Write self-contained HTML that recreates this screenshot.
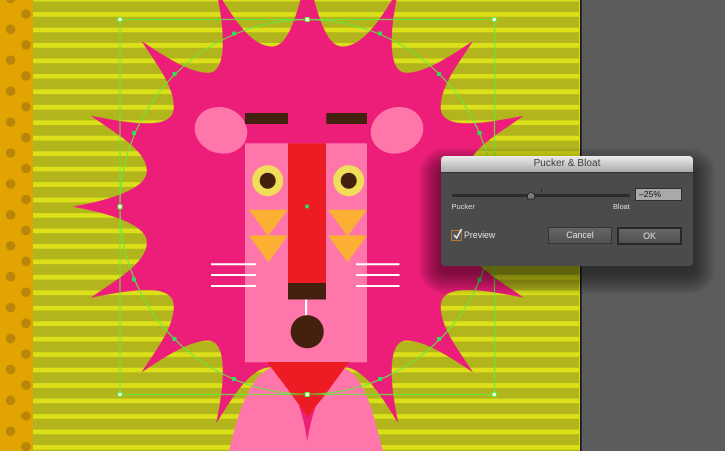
<!DOCTYPE html>
<html>
<head>
<meta charset="utf-8">
<style>
html,body{margin:0;padding:0;background:#5c5c5c}
#wrap{position:relative;width:725px;height:451px;overflow:hidden;font-family:"Liberation Sans",sans-serif}
svg.art{position:absolute;left:0;top:0}
#dlg{position:absolute;left:441px;top:156px;width:252px;height:110px;background:#4b4b4b;border-radius:4px}
#bar{position:absolute;left:0;top:0;width:252px;height:16px;border-radius:4px 4px 0 0;background:linear-gradient(#ececec,#ababab);border-bottom:1px solid #333;text-align:center;font-size:10px;line-height:16px;color:#3a3a3a;letter-spacing:.05px}
.t{position:absolute;color:#dedede;white-space:nowrap;line-height:10px}
#track{position:absolute;left:11px;top:38px;width:178px;height:3px;background:#2b2b2b;border-radius:1px}
#tick{position:absolute;left:100px;top:33px;width:1px;height:3px;background:#222}
#val{position:absolute;left:194px;top:32px;width:47px;height:13px;box-sizing:border-box;background:#a9a9a9;border:1px solid #2e2e2e;color:#111;font-size:8.6px;line-height:11px;padding-left:3px}
#chk{position:absolute;left:10px;top:74px;width:11px;height:11px;box-sizing:border-box;border:1px solid #b5763a;background:#555}
.btn{position:absolute;box-sizing:border-box;background:linear-gradient(#666,#515151);color:#e2e2e2;text-align:center;font-size:8.8px}
</style>
</head>
<body>
<div id="wrap">
<svg class="art" width="725" height="451" viewBox="0 0 725 451" xmlns="http://www.w3.org/2000/svg">
  <defs>
    <path id="q" d="M307.25 206.7 L73.5 206.7 C105 201 147 190 147 171 C147 150 115 133 91.5 116 C112 120 130 123.5 148 123.5 C165 123.5 174 118 174 107 C174 85 155 62 142 41.5 C165 57 190 73 208 73 C218 73 223 62 223 42 C223 25 220 8 216.5 -9 C228 8 248 46.7 272 46.7 C287 46.7 296 22 307.25 -27 Z" fill="#ed1e79" stroke="#ed1e79" stroke-width=".4"/>
  </defs>

  <rect x="0" y="0" width="725" height="451" fill="#5c5c5c"/>
  <rect x="33" y="0" width="547" height="451" fill="#b2b61c"/>
  <path fill="#dbe018" d="M33 -3.35h547v4.7h-547zM33 12.11h547v4.7h-547zM33 27.57h547v4.7h-547zM33 43.03h547v4.7h-547zM33 58.49h547v4.7h-547zM33 73.95h547v4.7h-547zM33 89.41h547v4.7h-547zM33 104.87h547v4.7h-547zM33 120.33h547v4.7h-547zM33 135.79h547v4.7h-547zM33 151.25h547v4.7h-547zM33 166.71h547v4.7h-547zM33 182.17h547v4.7h-547zM33 197.63h547v4.7h-547zM33 213.09h547v4.7h-547zM33 228.55h547v4.7h-547zM33 244.01h547v4.7h-547zM33 259.47h547v4.7h-547zM33 274.93h547v4.7h-547zM33 290.39h547v4.7h-547zM33 305.85h547v4.7h-547zM33 321.31h547v4.7h-547zM33 336.77h547v4.7h-547zM33 352.23h547v4.7h-547zM33 367.69h547v4.7h-547zM33 383.15h547v4.7h-547zM33 398.61h547v4.7h-547zM33 414.07h547v4.7h-547zM33 429.53h547v4.7h-547zM33 444.99h547v4.7h-547z"/>
  <rect x="0" y="0" width="33" height="451" fill="#e2a400"/>
  <g fill="#b98609">
    <circle cx="10.6" cy="-1.6" r="4.8"/><circle cx="10.6" cy="29.32" r="4.8"/><circle cx="10.6" cy="60.24" r="4.8"/><circle cx="10.6" cy="91.16" r="4.8"/><circle cx="10.6" cy="122.08" r="4.8"/><circle cx="10.6" cy="153" r="4.8"/><circle cx="10.6" cy="183.92" r="4.8"/><circle cx="10.6" cy="214.84" r="4.8"/><circle cx="10.6" cy="245.76" r="4.8"/><circle cx="10.6" cy="276.68" r="4.8"/><circle cx="10.6" cy="307.6" r="4.8"/><circle cx="10.6" cy="338.52" r="4.8"/><circle cx="10.6" cy="369.44" r="4.8"/><circle cx="10.6" cy="400.36" r="4.8"/><circle cx="10.6" cy="431.28" r="4.8"/>
    <circle cx="26" cy="14" r="4.8"/><circle cx="26" cy="44.92" r="4.8"/><circle cx="26" cy="75.84" r="4.8"/><circle cx="26" cy="106.76" r="4.8"/><circle cx="26" cy="137.68" r="4.8"/><circle cx="26" cy="168.6" r="4.8"/><circle cx="26" cy="199.52" r="4.8"/><circle cx="26" cy="230.44" r="4.8"/><circle cx="26" cy="261.36" r="4.8"/><circle cx="26" cy="292.28" r="4.8"/><circle cx="26" cy="323.2" r="4.8"/><circle cx="26" cy="354.12" r="4.8"/><circle cx="26" cy="385.04" r="4.8"/><circle cx="26" cy="415.96" r="4.8"/><circle cx="26" cy="446.88" r="4.8"/>
  </g>
  <rect x="579" y="0" width="1" height="451" fill="#dde319"/>
  <rect x="580" y="0" width="1.6" height="451" fill="#151515"/>

  <use href="#q"/>
  <use href="#q" transform="matrix(-1 0 0 1 614.5 0)"/>
  <use href="#q" transform="matrix(1 0 0 -1 0 413.4)"/>
  <use href="#q" transform="matrix(-1 0 0 -1 614.5 413.4)"/>

  <ellipse cx="221" cy="130.3" rx="26.6" ry="23" transform="rotate(18 221 130.3)" fill="#ff77aa"/>
  <ellipse cx="397" cy="130.3" rx="26.6" ry="23" transform="rotate(-18 397 130.3)" fill="#ff77aa"/>

  <path d="M229 451 C237 420 246 378 272 367 L342 367 C365 375 372 410 383 451 Z" fill="#ff77aa"/>
  <path d="M299 406 C303.5 418 305.5 430 307.3 441 C309 430 311.5 418 316 406 Z" fill="#ed1e79"/>

  <rect x="245" y="143.3" width="122" height="219" fill="#ff77aa"/>
  <path d="M267 362 L349 362 L325 395 C317 405 311 411 307.7 418 C304 411 298 404 292 395 Z" fill="#ed1c24"/>

  <rect x="245" y="113" width="43" height="11" fill="#44210e"/>
  <rect x="326.3" y="113" width="40.7" height="11" fill="#44210e"/>

  <rect x="288" y="143.3" width="38" height="139.7" fill="#ed1c24"/>
  <rect x="288" y="283" width="38" height="16.5" fill="#44210e"/>
  <rect x="305" y="299.5" width="2.2" height="16" fill="#fff"/>
  <circle cx="307.2" cy="331.7" r="16.6" fill="#44210e"/>

  <circle cx="267.7" cy="180.7" r="15.5" fill="#f0de5a"/>
  <circle cx="267.7" cy="180.7" r="8" fill="#44210e"/>
  <circle cx="348.7" cy="180.7" r="15.5" fill="#f0de5a"/>
  <circle cx="348.7" cy="180.7" r="8" fill="#44210e"/>

  <path d="M249 209.7 H287.7 L268.3 236 Z M249 235.5 H287.7 L268.3 262.3 Z M328 209.7 H367 L347.5 236 Z M328 235.5 H367 L347.5 262.3 Z" fill="#fbb034"/>

  <path d="M211 264.3 H256 M211 275 H256 M211 286 H256 M356 264.3 H399.5 M356 275 H399.5 M356 286 H399.5" stroke="#fff" stroke-width="2" fill="none"/>

  <!-- selection -->
  <g fill="none" stroke="#62ec3e" stroke-width="1.2" opacity=".85">
    <rect x="120" y="19.5" width="374.5" height="375"/>
    <circle cx="307.25" cy="206.9" r="187.3"/>
  </g>
  <path d="M291 394.5 H323" stroke="#8f8f1f" stroke-width="1.2"/>
  <g fill="#2ee05c">
    <rect x="132" y="131" width="4" height="4"/>
    <rect x="172.5" y="72" width="4" height="4"/>
    <rect x="232" y="31.5" width="4" height="4"/>
    <rect x="378" y="31.5" width="4" height="4"/>
    <rect x="437" y="72" width="4" height="4"/>
    <rect x="477.5" y="131" width="4" height="4"/>
    <rect x="132" y="277.5" width="4" height="4"/>
    <rect x="172.5" y="337" width="4" height="4"/>
    <rect x="232" y="377" width="4" height="4"/>
    <rect x="378" y="377" width="4" height="4"/>
    <rect x="437" y="337" width="4" height="4"/>
    <rect x="477.5" y="277.5" width="4" height="4"/>
    <rect x="305.2" y="204.7" width="3.6" height="3.6"/>
  </g>
  <g fill="#fff" stroke="#62ec3e" stroke-width="1">
    <rect x="118" y="17.5" width="4" height="4"/>
    <rect x="305.3" y="17.5" width="4" height="4"/>
    <rect x="492.3" y="17.5" width="4" height="4"/>
    <rect x="118" y="204.7" width="4" height="4"/>
    <rect x="118" y="392.5" width="4" height="4"/>
    <rect x="305.3" y="392.5" width="4" height="4"/>
    <rect x="492.3" y="392.5" width="4" height="4"/>
  </g>

  <!-- dialog drop shadow, built from stacked translucent rounded rects -->
  <g fill="#000" fill-opacity=".05">
    <rect x="439" y="168" width="256" height="106" rx="6"/>
    <rect x="437" y="166" width="260" height="110" rx="8"/>
    <rect x="435" y="164" width="264" height="114" rx="10"/>
    <rect x="433" y="162" width="268" height="118" rx="12"/>
    <rect x="431" y="160" width="272" height="122" rx="14"/>
    <rect x="429" y="158" width="276" height="126" rx="16"/>
    <rect x="427" y="156" width="280" height="130" rx="18"/>
    <rect x="425" y="154" width="284" height="134" rx="20"/>
    <rect x="423" y="152" width="288" height="138" rx="22"/>
    <rect x="421" y="150" width="292" height="142" rx="24"/>
    <rect x="419" y="148" width="296" height="146" rx="26"/>
  </g>
</svg>

<div id="dlg">
  <div id="bar">Pucker &amp; Bloat</div>
  <div id="track"></div>
  <div id="tick"></div>
  <svg style="position:absolute;left:85px;top:35px" width="10" height="9" viewBox="0 0 10 9"><path d="M1.5 8 V3.5 L5 .8 L8.5 3.5 V8 Z" fill="#7a7a7a" stroke="#2a2a2a" stroke-width="1"/></svg>
  <div class="t" style="left:10.5px;top:45.5px;font-size:7.5px">Pucker</div>
  <div class="t" style="left:172px;top:45.5px;font-size:7.4px">Bloat</div>
  <div id="val">–25%</div>
  <div id="chk"></div>
  <svg style="position:absolute;left:11px;top:71px" width="12" height="13" viewBox="0 0 12 13"><path d="M2 8 L4.6 11 L9.6 2" fill="none" stroke="#f0f0f0" stroke-width="1.5"/></svg>
  <div class="t" style="left:23px;top:74px;font-size:8.8px;color:#e2e2e2">Preview</div>
  <div class="btn" style="left:107px;top:71px;width:64px;height:17px;border:1px solid #343434;line-height:15px">Cancel</div>
  <div class="btn" style="left:176px;top:70.5px;width:65px;height:18.5px;border:2px solid #272727;line-height:14.5px">OK</div>
</div>
</div>
</body>
</html>
